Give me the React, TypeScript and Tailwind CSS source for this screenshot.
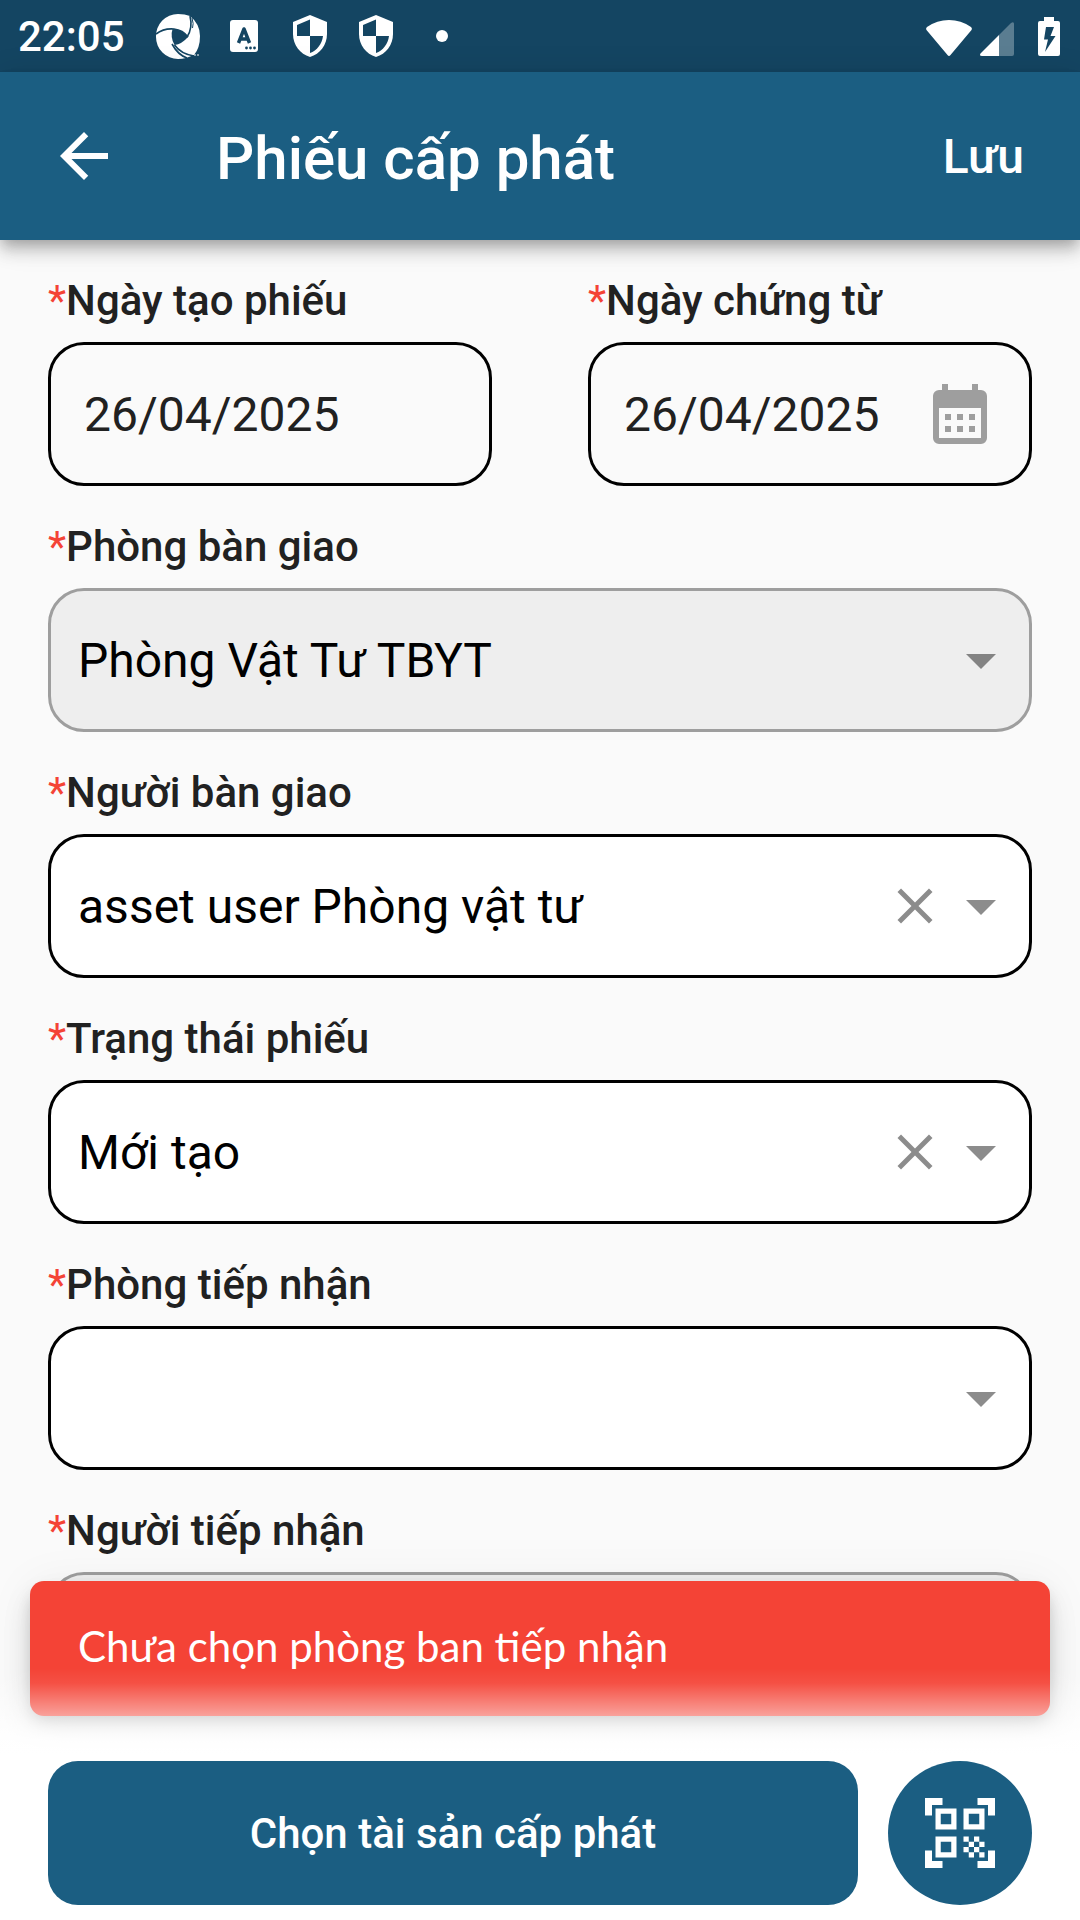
import { useId, useState } from "react";

type IconProps = { className?: string };

function SwirlIcon({ className }: IconProps) {
  return (
    <svg viewBox="0 0 60 60" className={className} aria-hidden="true">
      <path d="M29 8 Q36 8 41 10 Q51 18 51 30 Q51 42 45 49 L37 52 Q33 53 29 53 A22 22 0 0 1 7 31 A22 22 0 0 1 29 8Z" fill="#fff" />
      <path d="M23.500 23 Q33 23 39 31 Q33 38 25.500 39 Q21 31 23.500 23Z" fill="#144562" />
      <g fill="none" stroke="#144562" strokeWidth="1.6">
        <path d="M7 28 Q15 22 25 23 Q34 24 39 31" />
        <path d="M41 10 Q44 22 38 31" />
        <path d="M43 12 Q45 18 43.500 22" strokeWidth="1" />
        <path d="M23 38 Q29 49 38 52" />
        <path d="M25.500 39 Q32 48 45 50" />
      </g>
      <path d="M45 49 h2 M48 49 h2" stroke="#fff" strokeWidth="1" />
    </svg>
  );
}

function KeyboardIcon({ className }: IconProps) {
  return (
    <svg viewBox="0 0 28 32" className={className} aria-hidden="true">
      <rect width="28" height="32" rx="3" fill="#fff" />
      <path d="M8.500 23 L14 9 L19.500 23 M10.500 19 H17.500" fill="none" stroke="#144562" strokeWidth="3.500" strokeLinejoin="round" />
      <g fill="#144562">
        <circle cx="16.500" cy="28" r="1.400" />
        <circle cx="20.500" cy="28" r="1.400" />
        <circle cx="24.500" cy="28" r="1.400" />
      </g>
    </svg>
  );
}

function ShieldIcon({ className }: IconProps) {
  return (
    <svg viewBox="0 0 34 42" className={className} aria-hidden="true">
      <path d="M17 0 L34 7 V19 C34 30 27 39 17 42 C7 39 0 30 0 19 V7Z" fill="#fff" />
      <path d="M17 4.500 V21 H4 V10Z M17 21 H30 C29 29 24 35.500 17 38Z" fill="#144562" />
    </svg>
  );
}

function WifiIcon({ className }: IconProps) {
  return (
    <svg viewBox="0 0 46 36" className={className} aria-hidden="true">
      <path d="M1 7 Q11 0 23 0 Q35 0 45 7 Q46.500 8.500 45.500 10 L24.500 35 Q23 37 21.500 35 L0.500 10 Q-0.500 8.500 1 7Z" fill="#fff" />
    </svg>
  );
}

function SignalIcon({ className }: IconProps) {
  return (
    <svg viewBox="0 0 34 34" className={className} aria-hidden="true">
      <path d="M19 13 L31 1 Q34 -1 34 2 V32 Q34 34 32 34 H19Z" fill="#fff" fillOpacity="0.3" />
      <path d="M19 13 V34 H2 Q-1 34 0.500 31.500Z" fill="#fff" />
    </svg>
  );
}

function BatteryIcon({ className }: IconProps) {
  return (
    <svg viewBox="0 0 22 39" className={className} aria-hidden="true">
      <path d="M6 0 H16 V4 H20 Q22 4 22 6 V37 Q22 39 20 39 H2 Q0 39 0 37 V6 Q0 4 2 4 H6Z" fill="#fff" />
      <path d="M8 10 H16 L12.500 19 H17.500 L7 35 L10 22.500 H6Z" fill="#144562" />
    </svg>
  );
}

function BackIcon({ className }: IconProps) {
  return (
    <svg viewBox="0 0 24 24" className={className} fill="currentColor" aria-hidden="true">
      <path d="M20 11H7.830l5.590-5.590L12 4l-8 8 8 8 1.410-1.410L7.830 13H20v-2z" />
    </svg>
  );
}

function CalendarIcon({ className }: IconProps) {
  return (
    <svg viewBox="0 0 24 24" className={className} fill="currentColor" fillRule="evenodd" aria-hidden="true">
      <path d="M6 2h2v2h8V2h2v2h1a2 2 0 0 1 2 2v14a2 2 0 0 1-2 2H5a2 2 0 0 1-2-2V6a2 2 0 0 1 2-2h1zM5 10v10h14V10z" />
      <path d="M7 12h2v2H7zM11 12h2v2h-2zM15 12h2v2h-2zM7 16h2v2H7zM11 16h2v2h-2zM15 16h2v2h-2z" />
    </svg>
  );
}

function ClearIcon({ className }: IconProps) {
  return (
    <svg viewBox="0 0 24 24" className={className} fill="currentColor" aria-hidden="true">
      <path d="M19 6.410L17.590 5 12 10.590 6.410 5 5 6.410 10.590 12 5 17.590 6.410 19 12 13.410 17.590 19 19 17.590 13.410 12z" />
    </svg>
  );
}

function DropDownIcon({ className }: IconProps) {
  return (
    <svg viewBox="0 0 24 24" className={className} fill="currentColor" aria-hidden="true">
      <path d="M7 10l5 5 5-5z" />
    </svg>
  );
}

function ScanIcon({ className }: IconProps) {
  return (
    <svg viewBox="0 0 24 24" className={className} fill="currentColor" aria-hidden="true">
      <path d="M9.5 6.5v3h-3v-3h3M11 5H5v6h6V5zm-1.5 9.5v3h-3v-3h3M11 13H5v6h6v-6zm6.5-6.5v3h-3v-3h3M19 5h-6v6h6V5zm-6 8h1.5v1.5H13V13zm1.5 1.5H16V16h-1.5v-1.5zM16 13h1.5v1.5H16V13zm-3 3h1.5v1.5H13V16zm1.5 1.5H16V19h-1.5v-1.5zM16 16h1.5v1.5H16V16zm1.5-1.5H19V16h-1.5v-1.5zm0 3H19V19h-1.5v-1.5zM22 7h-2V4h-3V2h5v5zm0 15v-5h-2v3h-3v2h5zM2 22h5v-2H4v-3H2v5zM2 2v5h2V4h3V2H2z" />
    </svg>
  );
}

function FieldLabel({ htmlFor, text }: { htmlFor: string; text: string }) {
  return (
    <label htmlFor={htmlFor} className="block text-[42px] leading-[50px] font-medium whitespace-nowrap text-[#212121]">
      <span className="font-normal text-[#f44336]">*</span>
      {text}
    </label>
  );
}

function DateField({ label, value, picker }: { label: string; value: string; picker?: boolean }) {
  const id = useId();
  return (
    <div className="min-w-0 flex-1">
      <FieldLabel htmlFor={id} text={label} />
      <div className="mt-4 flex h-36 items-center rounded-[36px] border-3 border-black px-[33px]">
        <input
          id={id}
          type="text"
          defaultValue={value}
          className="h-full w-full min-w-0 flex-1 bg-transparent text-[48px] text-[#212121] outline-none"
        />
        {picker && (
          <button type="button" aria-label="Chọn ngày" className="shrink-0 text-[#9e9e9e]">
            <CalendarIcon className="size-[72px]" />
          </button>
        )}
      </div>
    </div>
  );
}

type SelectFieldProps = { label: string; value?: string; clearable?: boolean; disabled?: boolean };

function SelectField({ label, value = "", clearable, disabled }: SelectFieldProps) {
  const id = useId();
  const [current, setCurrent] = useState(value);
  const look = disabled ? "border-[#9e9e9e] bg-[#eeeeee]" : "border-black bg-white";
  return (
    <div>
      <FieldLabel htmlFor={id} text={label} />
      <div className={`relative mt-4 h-36 rounded-[36px] border-3 ${look}`}>
        <select
          id={id}
          value={current}
          disabled={disabled}
          onChange={(e) => setCurrent(e.target.value)}
          className="h-full w-full appearance-none rounded-[33px] bg-transparent pt-0.5 pr-36 pl-[27px] text-[48px] text-black opacity-100 outline-none"
        >
          <option value="" />
          {value && <option value={value}>{value}</option>}
        </select>
        <div className="pointer-events-none absolute inset-y-0 right-3 flex items-center text-black/45">
          {clearable && (
            <button type="button" aria-label="Xóa" onClick={() => setCurrent("")} className="pointer-events-auto">
              <ClearIcon className="size-[60px]" />
            </button>
          )}
          <DropDownIcon className="size-[72px]" />
        </div>
      </div>
    </div>
  );
}

export default function App() {
  return (
    <div className="relative flex h-dvh flex-col overflow-hidden bg-[#fafafa] font-['Roboto',sans-serif]">
      <div className="flex h-[72px] shrink-0 items-center justify-between bg-[#144562] pr-5 pl-[18px] text-white">
        <div className="flex items-center">
          <span className="pt-0.5 text-[42px] leading-[70px] font-medium">22:05</span>
          <SwirlIcon className="ml-6 size-[60px]" />
          <KeyboardIcon className="ml-[21px] h-8 w-7" />
          <ShieldIcon className="ml-[35px] h-[42px] w-[34px]" />
          <ShieldIcon className="ml-8 h-[42px] w-[34px]" />
          <span className="ml-[43px] size-3 rounded-full bg-white" />
        </div>
        <div className="flex items-end">
          <WifiIcon className="h-9 w-[46px]" />
          <SignalIcon className="ml-2 size-[34px]" />
          <BatteryIcon className="ml-6 h-[39px] w-[22px]" />
        </div>
      </div>

      <header className="relative z-10 flex h-[168px] shrink-0 items-center bg-[#1b5e82] pr-14 pl-12 text-white shadow-[0_6px_12px_-3px_rgba(0,0,0,0.2),0_12px_15px_0_rgba(0,0,0,0.14),0_3px_30px_0_rgba(0,0,0,0.12)]">
        <button type="button" aria-label="Quay lại">
          <BackIcon className="size-[72px]" />
        </button>
        <h1 className="ml-24 flex-1 pt-1.5 text-[60px] font-medium">Phiếu cấp phát</h1>
        <button type="button" className="pt-0.5 text-[48px] font-medium">
          Lưu
        </button>
      </header>

      <main className="flex min-h-0 flex-1 flex-col gap-9 overflow-y-auto px-12 pt-9 pb-51">
        <div className="flex gap-24">
          <DateField label="Ngày tạo phiếu" value="26/04/2025" />
          <DateField label="Ngày chứng từ" value="26/04/2025" picker />
        </div>
        <SelectField label="Phòng bàn giao" value="Phòng Vật Tư TBYT" disabled />
        <SelectField label="Người bàn giao" value="asset user Phòng vật tư" clearable />
        <SelectField label="Trạng thái phiếu" value="Mới tạo" clearable />
        <SelectField label="Phòng tiếp nhận" />
        <SelectField label="Người tiếp nhận" disabled />
      </main>

      <div
        role="alert"
        className="absolute inset-x-[30px] bottom-51 z-10 flex h-[135px] items-center rounded-[14px] bg-[#f44336] px-12 pb-1 font-['Lato',sans-serif] text-[42px] text-white shadow-[0_9px_15px_-3px_rgba(0,0,0,0.18),0_18px_30px_0_rgba(0,0,0,0.11),0_3px_48px_0_rgba(0,0,0,0.06)]"
      >
        Chưa chọn phòng ban tiếp nhận
      </div>

      <footer className="pointer-events-none absolute inset-x-0 bottom-0 z-20 flex gap-[30px] bg-[linear-gradient(to_bottom,rgba(255,255,255,0)_0px,rgba(255,255,255,0.07)_15px,rgba(255,255,255,0.5)_48px,rgba(255,255,255,0.9)_72px,#fff_87px)] px-12 pt-[93px] pb-[15px] text-white">
        <button type="button" className="pointer-events-auto h-36 flex-1 rounded-[30px] bg-[#1b5e82] text-[42px] font-medium">
          Chọn tài sản cấp phát
        </button>
        <button
          type="button"
          aria-label="Quét mã QR"
          className="pointer-events-auto flex size-36 shrink-0 items-center justify-center rounded-full bg-[#1b5e82]"
        >
          <ScanIcon className="size-[84px]" />
        </button>
      </footer>
    </div>
  );
}
